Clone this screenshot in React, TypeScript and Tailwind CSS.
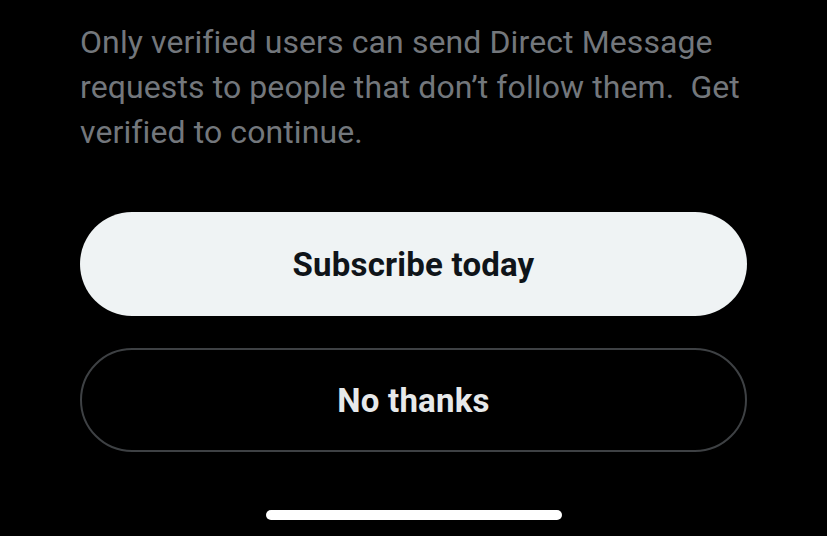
export default function App() {
  return (
    <div className="flex h-[536px] w-[827px] flex-col bg-black px-20 pt-5 font-['Roboto',sans-serif]">
      <p className="text-[32px] leading-[45px] tracking-[0.1px] text-[#73777c]">
        Only verified users can send Direct Message requests to people that
        don’t follow them.&nbsp; Get verified to continue.
      </p>

      <button className="mt-[57px] flex h-[104px] items-center justify-center rounded-full bg-[#eff3f4] pt-px text-[33px] font-bold tracking-[0.2px] text-[#0f1419]">
        Subscribe today
      </button>

      <button className="mt-8 flex h-[104px] items-center justify-center rounded-full border-2 border-[#3e4144] pt-px text-[33px] font-bold tracking-[0.2px] text-[#e7e9ea]">
        No thanks
      </button>

      <div className="mt-auto flex justify-center pb-4">
        <div className="h-[10px] w-[296px] rounded-full bg-white" />
      </div>
    </div>
  );
}
